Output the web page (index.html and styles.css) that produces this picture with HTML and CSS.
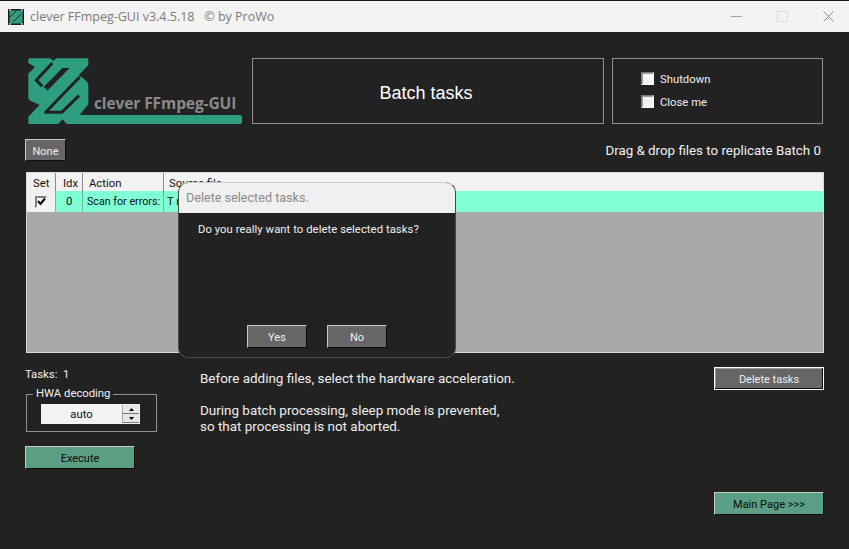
FILE: index.html
```html
<!DOCTYPE html>
<html lang="en">
<head>
<meta charset="utf-8">
<title>clever FFmpeg-GUI</title>
<link rel="stylesheet" href="styles.css">
</head>
<body>
<div class="window">
  <header class="titlebar">
    <svg class="app-icon" viewBox="0 0 16 16" width="16" height="16">
      <rect width="16" height="16" fill="#1c1c1c"/>
      <rect x="1.5" y="1.5" width="13" height="13" fill="#2f9e80"/>
      <path d="M2 8L8 2M5 13L13 5" stroke="#1c1c1c" stroke-width="1" fill="none"/>
      <path d="M1 1h2M13 1h2M1 15h2M13 15h2" stroke="#fff" stroke-width="1"/>
    </svg>
    <span class="app-title">clever FFmpeg-GUI v3.4.5.18&nbsp;&nbsp; © by ProWo</span>
    <div class="win-controls">
      <svg class="win-min" width="11" height="11" viewBox="0 0 11 11"><path d="M0 5.5H11" stroke="#a0a0a0"/></svg>
      <svg class="win-max" width="11" height="11" viewBox="0 0 11 11"><rect x=".5" y=".5" width="10" height="10" fill="none" stroke="#dcdcdc"/></svg>
      <svg class="win-close" width="11" height="11" viewBox="0 0 11 11"><path d="M.5 .5L10.5 10.5M10.5 .5L.5 10.5" stroke="#8c8c8c"/></svg>
    </div>
  </header>

  <main class="content">
    <section class="top-row">
      <div class="logo">
        <svg class="logo-mark" width="216" height="68" viewBox="0 0 648 204">
          <g transform="translate(-6 -6)">
            <path fill="#2f9e80" d="M10 14Q10 10 14 10H76L85 18L94 10H186Q190 10 190 14V30L161 61L172 68Q190 80 190 90V148L164 180H645Q651 180 651 186V201Q651 207 645 207H126L112 193L100 207H14Q10 207 10 203V185L44 150L16 137Q10 134 10 128V56L30 36L10 24Z"/>
            <path fill="none" stroke="#222" stroke-width="9" d="M82 24L34 76L52 94"/>
            <path fill="none" stroke="#222" stroke-width="9" stroke-linejoin="round" d="M164 66L62 172H110L162 122"/>
            <path fill="#222" d="M112 39H134L68 106L56 96Z"/>
          </g>
        </svg>
        <span class="logo-text">clever FFmpeg-GUI</span>
      </div>
      <div class="frame batch-title">Batch tasks</div>
      <div class="frame options">
        <label class="check-row"><span class="check"></span>Shutdown</label>
        <label class="check-row"><span class="check"></span>Close me</label>
      </div>
    </section>

    <section class="tool-row">
      <button class="btn btn-none">None</button>
      <span class="hint">Drag &amp; drop files to replicate Batch 0</span>
    </section>

    <section class="table">
      <div class="t-row t-head">
        <span class="c c-set">Set</span>
        <span class="c c-idx">Idx</span>
        <span class="c c-act">Action</span>
        <span class="c c-src">Source file</span>
      </div>
      <div class="t-row t-body">
        <span class="c c-set">
          <span class="check check-small">
            <svg width="9" height="9" viewBox="0 0 9 9"><path d="M1 4L3.5 7L8 1.5" fill="none" stroke="#000" stroke-width="2"/></svg>
          </span>
        </span>
        <span class="c c-idx">0</span>
        <span class="c c-act">Scan for errors:</span>
        <span class="c c-src">T name</span>
      </div>
    </section>

    <section class="lower">
      <div class="lower-left">
        <div class="tasks">Tasks:&nbsp; 1</div>
        <fieldset class="hwa">
          <legend>HWA decoding</legend>
          <div class="spinner">
            <span class="spin-val">auto</span>
            <span class="spin-btns">
              <span class="spin-btn"><svg width="5" height="3" viewBox="0 0 5 3"><path d="M2.5 0L5 3H0Z"/></svg></span>
              <span class="spin-btn"><svg width="5" height="3" viewBox="0 0 5 3"><path d="M0 0H5L2.5 3Z"/></svg></span>
            </span>
          </div>
        </fieldset>
        <button class="btn btn-green btn-exec">Execute</button>
      </div>
      <div class="lower-mid">
        <p>Before adding files, select the hardware acceleration.</p>
        <p>During batch processing, sleep mode is prevented,<br>so that processing is not aborted.</p>
      </div>
      <div class="lower-right">
        <button class="btn btn-focus">Delete tasks</button>
        <button class="btn btn-green btn-main">Main Page &gt;&gt;&gt;</button>
      </div>
    </section>
  </main>

  <div class="dialog">
    <div class="dialog-title">Delete selected tasks.</div>
    <div class="dialog-body">
      <p class="dialog-msg">Do you really want to delete selected tasks?</p>
      <div class="dialog-btns">
        <button class="btn btn-dlg">Yes</button>
        <button class="btn btn-dlg">No</button>
      </div>
    </div>
  </div>
</div>
</body>
</html>
```
FILE: styles.css
```css
* { box-sizing: border-box; }
html, body { margin: 0; padding: 0; }
body {
  width: 849px; height: 549px; overflow: hidden;
  background: #222;
  font-family: Roboto, "Liberation Sans", sans-serif;
  font-size: 11.3px; color: #f0f0f0;
}
.window { position: relative; width: 849px; height: 549px; display: flex; flex-direction: column; }

.titlebar {
  height: 32px; flex: none; display: flex; align-items: center;
  background: #f3f3f3; border-top: 1px solid #1a1a1a; padding-left: 8px;
}
.app-icon { flex: none; }
.app-title { margin-left: 6px; font-family: "Open Sans", sans-serif; font-size: 12.5px; color: #7a7a7a; white-space: nowrap; }
.win-controls { margin-left: auto; display: flex; align-items: center; padding-right: 15px; gap: 35px; }

.content { flex: 1; display: flex; flex-direction: column; padding: 25px 25px 0 25px; min-height: 0; }

.top-row { display: flex; height: 67px; flex: none; }
.logo { position: relative; width: 229px; flex: none; margin-left: 2px; }
.logo-mark { position: absolute; left: 0; top: 0; }
.logo-text {
  position: absolute; left: 67px; top: 35px;
  font-family: "Open Sans", sans-serif; font-weight: 700; font-size: 15.5px; color: #8a8a8a; white-space: nowrap;
  letter-spacing: -.1px;
}

.frame { border: 1px solid #8f8f8f; height: 66px; margin-top: 1px; }
.batch-title {
  width: 352px; margin-left: -4px; padding: 4px 4px 0 0; display: flex; align-items: center; justify-content: center;
  font-family: "Liberation Sans", sans-serif; font-size: 18px; color: #fff;
}
.options {
  width: 211px; margin-left: 8px; padding: 14px 0 0 28px;
  display: flex; flex-direction: column; gap: 10px;
}
.check-row { display: flex; align-items: center; gap: 6px; height: 13px; line-height: 13px; color: #f0f0f0; }
.check {
  display: inline-flex; align-items: center; justify-content: center; flex: none;
  width: 13px; height: 13px; background: #f4f4f4;
  border: 1px solid; border-color: #7d7d7d #f4f4f4 #f4f4f4 #7d7d7d;
  box-shadow: inset 1px 1px 0 #9a9a9a;
}
.check-row .check { margin-top: -2px; }
.check-small { width: 12px; height: 12px; box-shadow: inset 1px 1px 0 #888; }

.tool-row {
  display: flex; justify-content: space-between; align-items: center;
  height: 22px; margin-top: 15px; flex: none; padding-right: 3px;
}
.hint { font-size: 13.35px; color: #f0f0f0; }

.btn {
  font-family: Roboto, "Liberation Sans", sans-serif; font-size: 11px; line-height: 1; padding: 1px 0 0; cursor: default;
  color: #eee; background: #666;
  border: 1px solid; border-color: #c8c8c8 #0c0c0c #0c0c0c #c8c8c8;
}
.btn-none { width: 41px; height: 22px; padding-top: 2px; }
.btn-green { background: #5a9e83; color: #0c0c0c; }

.table {
  margin: 12px 0 0 1px; width: 798px; height: 180px; flex: none;
  background: #a9a9a9; border: 1px solid #d8d8d8; border-top: 0; box-shadow: 0 -1px 0 #d8d8d8;
}
.t-row { display: flex; }
.t-head { height: 18px; background: #f2f2f2; color: #111; line-height: 20px; }
.t-head .c { padding-top: 1px; }
.t-body { height: 21px; line-height: 21px; color: #111; background: #7fffd4; }
.c { flex: none; padding-left: 6px; border-right: 1px solid #8a8a8a; white-space: nowrap; overflow: hidden; }
.t-body .c { border-right-color: #6fb7a0; }
.c-set { width: 29px; }
.c-idx { width: 27px; padding-left: 7px; }
.c-act { width: 81px; }
.c-src { flex: 1; border-right: 0; padding-left: 5px; }
.t-body .c-set { background: #f2f2f2; display: flex; align-items: center; padding-left: 8px; }
.t-body .c-idx { padding-left: 10px; }
.t-body .c-act { padding-left: 4px; font-size: 10.7px; }
.t-body .c-src { padding-left: 3px; }

.lower { flex: 1; display: flex; min-height: 0; }
.lower-left { width: 175px; flex: none; padding-top: 15px; }
.tasks { height: 14px; line-height: 14px; }
.hwa {
  margin: 5px 0 0 1px; padding: 0 0 0 14px; width: 131px; height: 45px;
  border: 1px solid #8f8f8f;
}
.hwa legend { padding: 0 3px; margin-left: -8px; line-height: 14px; }
.spinner {
  display: flex; align-items: center; width: 99px; height: 20px; margin-top: 3px;
  background: #f2f2f2; color: #111;
}
.spin-val { flex: 1; text-align: center; }
.spin-btns { width: 17px; display: flex; flex-direction: column; height: 18px; margin-right: 1px; }
.spin-btn {
  flex: 1; display: flex; align-items: center; justify-content: center;
  background: #e6e6e6; border-bottom: 1px solid #777; border-left: 1px solid #aaa;
}
.btn-exec { display: block; width: 110px; height: 23px; margin-top: 14px; }

.lower-mid { flex: 1; padding-top: 18px; font-size: 13.45px; line-height: 16px; color: #eee; }
.lower-mid p { margin: 0 0 16px; }

.lower-right {
  width: 110px; flex: none; display: flex; flex-direction: column; align-items: flex-end;
  padding-top: 14px;
}
.btn-focus { width: 110px; height: 23px; border: 1px solid #fff; outline: none; box-shadow: inset -1px -1px 0 #0c0c0c, inset 1px 1px 0 #999; }
.btn-main { width: 110px; height: 23px; margin-top: 102px; }

.dialog {
  position: absolute; left: 178px; top: 182px; width: 278px; height: 176px;
  display: flex; flex-direction: column; border-radius: 10px; overflow: hidden;
  border: 1px solid #4a4a4a; border-top-color: #ccc; background: #222;
}
.dialog-title {
  height: 30px; flex: none; background: #f0f0f0; color: #8a8a8a;
  font-size: 12.6px; line-height: 30px; padding-left: 7px;
}
.dialog-body { flex: 1; display: flex; flex-direction: column; }
.dialog-msg { margin: 10px 0 0 19px; line-height: 14px; letter-spacing: .05px; color: #f0f0f0; }
.dialog-btns { margin-top: auto; margin-bottom: 9px; display: flex; justify-content: center; gap: 20px; }
.btn-dlg { width: 60px; height: 23px; }
```
